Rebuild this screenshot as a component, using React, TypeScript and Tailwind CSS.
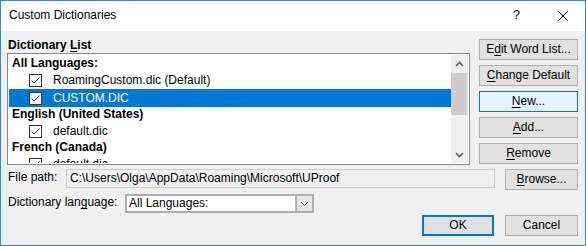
import type { ReactNode } from 'react';

const ROWS: { kind: 'header' | 'item'; text: string; selected?: boolean }[] = [
    { kind: 'header', text: 'All Languages:' },
    { kind: 'item', text: 'RoamingCustom.dic (Default)' },
    { kind: 'item', text: 'CUSTOM.DIC', selected: true },
    { kind: 'header', text: 'English (United States)' },
    { kind: 'item', text: 'default.dic' },
    { kind: 'header', text: 'French (Canada)' },
    { kind: 'item', text: 'default.dic' },
];

function Btn({ children, focused, className = '' }: { children: ReactNode; focused?: boolean; className?: string }) {
    return (
        <div
            className={`h-[21px] flex items-center justify-center leading-[15px] ${focused ? 'bg-[#e5f1fb] border border-[#0078d7]' : 'bg-[#e1e1e1] border border-[#adadad]'} ${className}`}
        >
            {children}
        </div>
    );
}

function CheckBox() {
    return (
        <div className="w-[13px] h-[13px] border border-[#333333] bg-white flex items-center justify-center">
            <svg width="11" height="11" viewBox="0 0 11 11">
                <polyline points="1.5,5.5 4,8 9.5,2.5" fill="none" stroke="#333333" strokeWidth="1" />
            </svg>
        </div>
    );
}

function Chevron({ up }: { up?: boolean }) {
    return (
        <svg width="9" height="6" viewBox="0 0 9 6">
            <polyline
                points={up ? '1,5 4.5,1.5 8,5' : '1,1 4.5,4.5 8,1'}
                fill="none"
                stroke="#606060"
                strokeWidth="1.6"
            />
        </svg>
    );
}

export default function App() {
    return (
        <div className="w-[586px] h-[246px] border border-[#2b88dc] bg-[#f0f0f0] flex flex-col overflow-hidden text-[12px] text-black font-['Liberation_Sans',Arial,sans-serif]">
            {/* Title bar */}
            <div className="h-[30px] bg-white flex items-start pt-[7px] pl-[8px] shrink-0">
                <span className="leading-[15px]">Custom Dictionaries</span>
                <span className="ml-auto leading-[15px] text-[13px] mt-[-1px]">?</span>
                <svg className="ml-[38px] mr-[17px] mt-[3px]" width="10" height="10" viewBox="0 0 10 10">
                    <path d="M0.5 0.5 L9.5 9.5 M9.5 0.5 L0.5 9.5" stroke="#000" strokeWidth="1" />
                </svg>
            </div>

            {/* Body */}
            <div className="flex-1 flex flex-col pl-[6px] pr-[7px] pt-[7px]">
                <div className="flex gap-[9px]">
                    <div className="flex-1 flex flex-col">
                        <div className="h-[15px] leading-[15px] font-bold pl-px">
                            Dictionary <u className="underline-offset-[2px]">L</u>ist
                        </div>
                        <div className="h-[112px] border border-[#828790] bg-white p-px flex">
                            <div className="flex-1 overflow-hidden pt-px">
                                {ROWS.map((row, i) =>
                                    row.kind === 'header'
                                        ? (
                                                <div key={i} className="h-[15px] leading-[15px] font-bold pl-[3px]">
                                                    {row.text}
                                                </div>
                                            )
                                        : (
                                                <div
                                                    key={i}
                                                    className={`h-[18px] flex items-center pl-[20px] ${row.selected ? 'bg-[#0078d7] text-white' : ''}`}
                                                >
                                                    <CheckBox />
                                                    <span className="ml-[11px] leading-[18px]">{row.text}</span>
                                                </div>
                                            ),
                                )}
                            </div>
                            <div className="w-[17px] bg-[#f0f0f0] flex flex-col">
                                <div className="h-[17px] flex items-center justify-center">
                                    <Chevron up />
                                </div>
                                <div className="h-[42px] mr-px bg-[#cdcdcd] mt-px" />
                                <div className="flex-1" />
                                <div className="h-[17px] flex items-center justify-center">
                                    <Chevron />
                                </div>
                            </div>
                        </div>
                    </div>

                    <div className="w-[99px] pt-px flex flex-col gap-[5px]">
                        <Btn>
                            E<u className="underline-offset-[2px]">d</u>it Word List...
                        </Btn>
                        <Btn>
                            <u className="underline-offset-[2px]">C</u>hange Default
                        </Btn>
                        <Btn focused>
                            <u className="underline-offset-[2px]">N</u>ew...
                        </Btn>
                        <Btn>
                            <u className="underline-offset-[2px]">A</u>dd...
                        </Btn>
                        <Btn>
                            <u className="underline-offset-[2px]">R</u>emove
                        </Btn>
                    </div>
                </div>

                {/* File path */}
                <div className="mt-[4px] flex items-start">
                    <div className="w-[59px] pl-px pt-px leading-[15px]">File path:</div>
                    <div className="flex-1 h-[19px] border border-[#cccccc] bg-[#f0f0f0] px-[3px] pt-px leading-[15px] whitespace-nowrap overflow-hidden">
                        C:\Users\Olga\AppData\Roaming\Microsoft\UProof
                    </div>
                    <Btn className="ml-[10px] w-[73px]">
                        <u className="underline-offset-[2px]">B</u>rowse...
                    </Btn>
                </div>

                {/* Dictionary language */}
                <div className="mt-[4px] flex items-start">
                    <div className="w-[118px] pl-px pt-px leading-[15px]">
                        Dictionary lan<u className="underline-offset-[2px]">g</u>uage:
                    </div>
                    <div className="w-[189px] h-[19px] border-2 border-[#adadad] bg-white flex">
                        <div className="flex-1 pl-[2px] leading-[15px]">All Languages:</div>
                        <div className="w-[17px] border-l-2 border-[#adadad] bg-[#e5e5e5] flex items-center justify-center">
                            <svg width="9" height="6" viewBox="0 0 9 6">
                                <polyline points="1,1 4.5,4.5 8,1" fill="none" stroke="#505050" strokeWidth="1" />
                            </svg>
                        </div>
                    </div>
                </div>

                {/* OK / Cancel */}
                <div className="mt-[2px] flex justify-end gap-[11px]">
                    <div className="w-[72px] h-[21px] border-2 border-[#0078d7] bg-[#e1e1e1] flex items-center justify-center leading-[15px]">
                        OK
                    </div>
                    <Btn className="w-[73px]">Cancel</Btn>
                </div>
            </div>
        </div>
    );
}
